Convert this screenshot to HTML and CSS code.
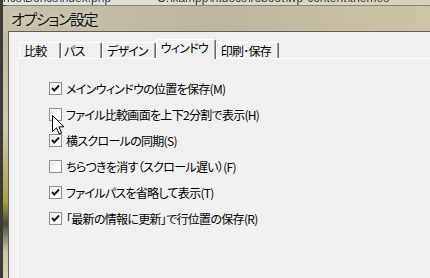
FILE: index.html
```html
<!DOCTYPE html>
<html lang="ja">
<head>
    <meta charset="UTF-8">
    <meta name="viewport" content="width=device-width, initial-scale=1.0">
    <title>オプション設定</title>
    <link rel="stylesheet" href="styles.css">
</head>
<body>
    <div class="stage">
        <div class="behind">
            <span class="behind-path">ncs\Boncs\ndex.php</span>
            <span class="behind-path">C:\xampp\htdocs\roboot\wp-content\themes</span>
        </div>

        <div class="dialog">
            <div class="titlebar">オプション設定</div>

            <div class="client">
                <div class="tabbar">
                    <div class="tab tab-compare">比較</div>
                    <div class="tab tab-path">パス</div>
                    <div class="tab tab-design">デザイン</div>
                    <div class="tab tab-window is-active">ウィンドウ</div>
                    <div class="tab tab-print">印刷･保存</div>
                </div>

                <div class="panel">
                    <label class="option">
                        <span class="check is-on"><svg viewBox="0 0 11 11"><polyline points="2,5 4.3,7.5 9,2.5"/></svg></span>
                        <span>メインウィンドウの位置を保存(M)</span>
                    </label>
                    <label class="option">
                        <span class="check"></span>
                        <span>ファイル比較画面を上下2分割で表示(H)</span>
                    </label>
                    <label class="option">
                        <span class="check is-on"><svg viewBox="0 0 11 11"><polyline points="2,5 4.3,7.5 9,2.5"/></svg></span>
                        <span>横スクロールの同期(S)</span>
                    </label>
                    <label class="option">
                        <span class="check"></span>
                        <span>ちらつきを消す（スクロール遅い）(F)</span>
                    </label>
                    <label class="option">
                        <span class="check is-on"><svg viewBox="0 0 11 11"><polyline points="2,5 4.3,7.5 9,2.5"/></svg></span>
                        <span>ファイルパスを省略して表示(T)</span>
                    </label>
                    <label class="option">
                        <span class="check is-on"><svg viewBox="0 0 11 11"><polyline points="2,5 4.3,7.5 9,2.5"/></svg></span>
                        <span>「最新の情報に更新」で行位置の保存(R)</span>
                    </label>
                </div>
            </div>
        </div>
    </div>

    <!-- mouse pointer over the second checkbox -->
    <svg class="pointer" viewBox="0 0 13 21" width="13" height="21">
        <path d="M0.5 0.5 L0.5 16.5 L4.5 12.8 L7.2 19 L9.6 18 L7 11.8 L12 11.8 Z"/>
    </svg>
</body>
</html>
```

FILE: styles.css
```css
body {
    margin: 0;
    width: 430px;
    height: 278px;
    overflow: hidden;
    position: relative;
    background-color: #3b3b36;
    font-family: "Noto Sans CJK JP", "Liberation Sans", sans-serif;
    font-feature-settings: "palt";
    color: #000;
}
.stage {
    margin-left: 3px;
    height: 278px;
    display: flex;
    flex-direction: column;
}
.behind {
    height: 5px;
    overflow: hidden;
    display: flex;
    gap: 46px;
    background: linear-gradient(to right, #e4e4e2, #dcd8cc 60%, #d6cfb4);
}
.behind-path {
    margin-top: -8px;
    font-family: "Liberation Sans", sans-serif;
    font-size: 12px;
    line-height: 12px;
    color: #3c3c3c;
    white-space: nowrap;
    filter: blur(0.4px);
}
.dialog {
    flex: 1;
    display: flex;
    flex-direction: column;
    padding-left: 5px;
    border-radius: 5px 0 0 0;
    border-top: 1px solid #8a8578;
    background: linear-gradient(to bottom, #d4ccb6 0%, #c2b9a2 12%, #cfc7ae 45%, #a9a04a 72%, #4c4a3c 80%, #c9c2a4 90%, #d9d2b8 100%);
}
.titlebar {
    height: 25px;
    margin-left: -5px;
    padding-left: 8px;
    font-size: 15px;
    line-height: 25px;
    letter-spacing: -1.4px;
    color: #141414;
    text-shadow: 0 0 6px rgba(255, 255, 255, 0.7);
    background: linear-gradient(to right, #c8c0a9, #bdb59e 50%, #cdc4a6);
}
.client {
    flex: 1;
    display: flex;
    flex-direction: column;
    padding-left: 8px;
    padding-top: 7px;
    background-color: #f0f0f0;
    border-top: 1px solid #5f5d56;
    border-left: 1px solid #5f5d56;
}
.tabbar {
    display: flex;
    align-items: flex-end;
    padding-left: 2px;
    height: 19px;
    position: relative;
    z-index: 1;
}
.tab {
    box-sizing: border-box;
    height: 16px;
    padding: 1px 7px 0 4px;
    font-size: 12px;
    line-height: 14px;
    letter-spacing: -0.8px;
    white-space: nowrap;
    background-color: #f0f0f0;
    border-top: 1px solid #fff;
    border-left: 1px solid #fff;
    border-right: 1px solid #696969;
    border-radius: 2px 2px 0 0;
    box-shadow: inset -1px 0 #a0a0a0;
}
.tab.is-active {
    height: 20px;
    margin-bottom: -1px;
    padding-top: 1px;
}
.tab-compare { min-width: 42px; }
.tab-path { min-width: 41px; padding-left: 2px; }
.panel {
    flex: 1;
    display: flex;
    flex-direction: column;
    padding: 16px 0 0 31px;
    border-top: 1px solid #fff;
    border-left: 1px solid #fff;
}
.option {
    height: 26px;
    display: flex;
    align-items: center;
    gap: 4px;
    font-size: 12px;
    letter-spacing: -0.7px;
    white-space: nowrap;
}
.check {
    box-sizing: border-box;
    width: 13px;
    height: 13px;
    border: 1px solid #8e8f8f;
    background: linear-gradient(135deg, #e2e2e2, #fdfdfd 60%);
    box-shadow: inset 0 0 0 1px #f6f6f6;
    display: flex;
}
.check svg {
    width: 11px;
    height: 11px;
}
.check polyline {
    fill: none;
    stroke: #1a1a1a;
    stroke-width: 1.9;
}
.pointer {
    position: absolute;
    left: 52px;
    top: 115px;
}
.pointer path {
    fill: #fff;
    stroke: #000;
    stroke-width: 1;
    stroke-linejoin: miter;
}
```
